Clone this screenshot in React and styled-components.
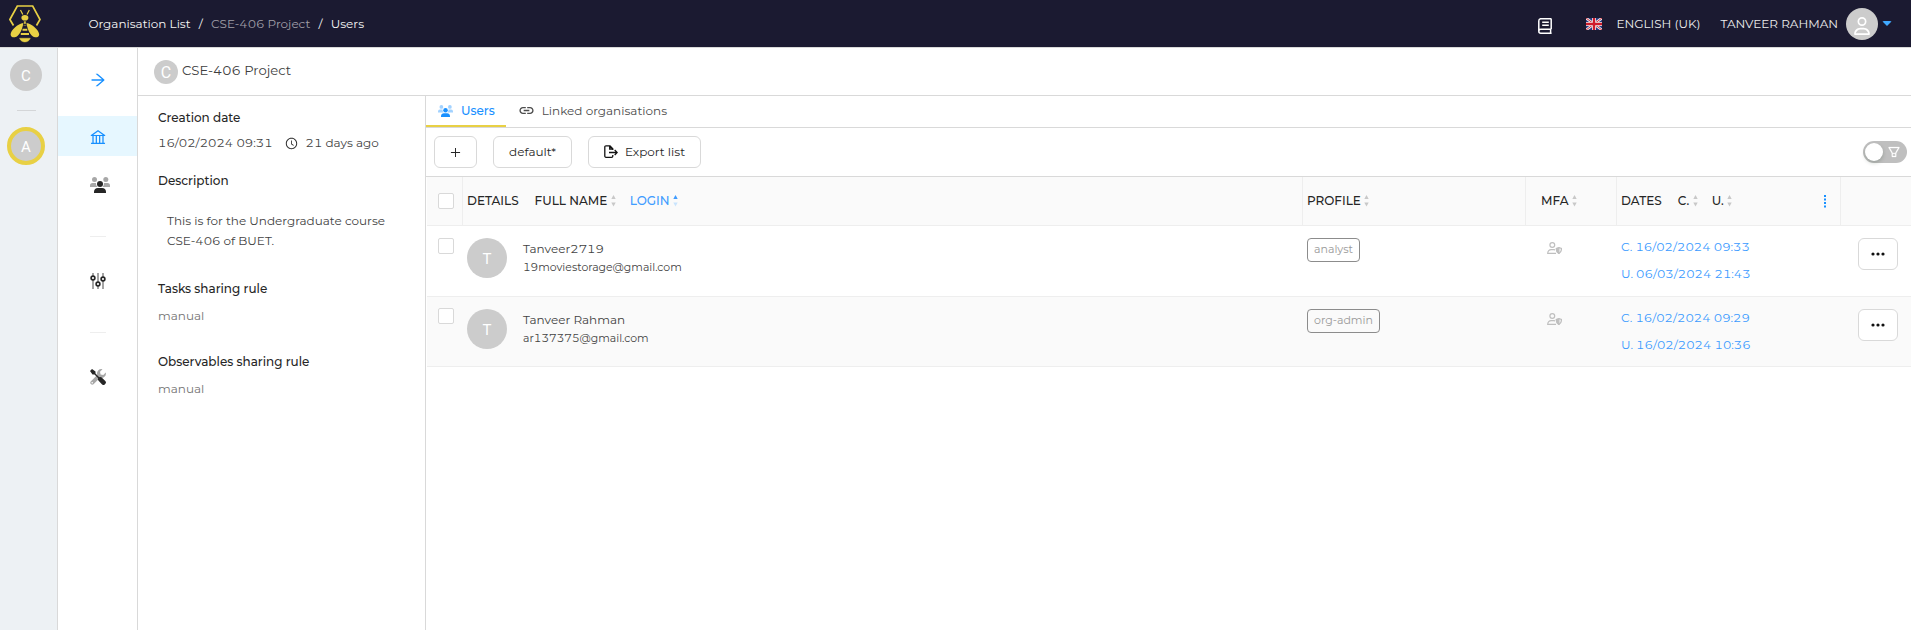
import React from 'react';
import styled, { createGlobalStyle, css } from 'styled-components';
import {
  AiOutlineArrowRight,
  AiOutlineBank,
  AiOutlineClockCircle,
  AiOutlineFilter,
  AiOutlinePlus,
} from 'react-icons/ai';
import { MdLink } from 'react-icons/md';
import { FaRegUser } from 'react-icons/fa6';

const GlobalStyle = createGlobalStyle`
  * { box-sizing: border-box; }
  body {
    margin: 0;
    background: #fff;
    color: #434343;
    font-family: Montserrat, "Liberation Sans", sans-serif;
    font-size: 12px;
    line-height: 20px;
    font-feature-settings: "tnum";
    overflow: hidden;
  }
  svg { display: block; flex: none; }
`;

const Page = styled.div`
  height: 100vh;
  display: flex;
  flex-direction: column;
`;

const Header = styled.header`
  height: 48px;
  flex: none;
  display: flex;
  align-items: center;
  padding: 0 19px 0 9px;
  background: #1b1a31;
  border-bottom: 1px solid #d9d9d9;
  color: #eee;
`;

const Crumbs = styled.nav`
  display: flex;
  gap: 8.2px;
  margin-left: 47.4px;
  flex: 1;
`;

const Crumb = styled.span`
  color: ${(p) => (p.$muted ? '#a09fa8' : '#f6f6f6')};
`;

const Account = styled.div`
  display: flex;
  align-items: center;
  height: 47px;
`;

const Language = styled.span`
  margin: 0 20px 0 14px;
`;

const FlagIcon = styled.svg`
  margin-left: 34px;
`;

const BookIcon = styled.svg`
  margin-top: 4px;
`;

const Caret = styled.span`
  margin-left: 4px;
  border: 5px solid transparent;
  border-top-color: #40a9ff;
  border-bottom: 0;
  border-radius: 2px;
`;

const Avatar = styled.span`
  width: ${(p) => p.$size}px;
  height: ${(p) => p.$size}px;
  flex: none;
  display: flex;
  align-items: center;
  justify-content: center;
  border-radius: 50%;
  background: #ccc;
  color: #fff;
  font: 400 ${(p) => p.$font || 15}px/1 Roboto, sans-serif;
  padding-top: 2px;
  ${(p) =>
    p.$selected &&
    css`
      border: 4px solid #e8d044;
    `}
`;

const HeaderAvatar = styled(Avatar)`
  margin-left: 8px;
  padding-top: 4px;
`;

const Body = styled.div`
  flex: 1;
  display: flex;
  min-height: 0;
`;

const OrgRail = styled.aside`
  width: 58px;
  flex: none;
  display: flex;
  flex-direction: column;
  align-items: center;
  padding: 11px 5px 0 0;
  background: #edf1f4;
  border-right: 1px solid #d9d9d9;
`;

const RailDivider = styled.span`
  width: 19px;
  height: 1px;
  margin: 19px 0 16px;
  background: #d4d6d8;
`;

const Menu = styled.nav`
  width: 80px;
  flex: none;
  padding-top: 12px;
  border-right: 1px solid #d9d9d9;
  color: #262626;
`;

const MenuItem = styled.div`
  height: 40px;
  display: flex;
  align-items: center;
  padding-left: ${(p) => p.$left ?? 32}px;
  padding-top: ${(p) => (p.$active ? 2 : 0)}px;
  margin-bottom: ${(p) => p.$gap || 0}px;
  background: ${(p) => (p.$active ? '#e6f7ff' : 'transparent')};
  color: ${(p) => (p.$blue ? '#1890ff' : 'inherit')};
`;

const MenuDivider = styled.div`
  width: 16px;
  height: 1px;
  margin: 0 0 24px 32px;
  background: #eee;
`;

const Main = styled.main`
  flex: 1;
  min-width: 0;
  display: flex;
  flex-direction: column;
`;

const TitleBar = styled.div`
  height: 48px;
  flex: none;
  display: flex;
  align-items: center;
  gap: 4px;
  padding-left: 16px;
  border-bottom: 1px solid #d9d9d9;
  font-size: 13.2px;
`;

const Title = styled.span`
  padding-bottom: 3px;
  color: #404040;
`;

const Columns = styled.div`
  flex: 1;
  display: flex;
`;

const Details = styled.section`
  width: 288px;
  flex: none;
  padding: 12px 20px;
  border-right: 1px solid #d9d9d9;
`;

const Label = styled.div`
  color: #262626;
  font-weight: 500;
`;

const DateLine = styled.div`
  display: flex;
  align-items: center;
  margin: 5px 0 18px;
`;

const Elapsed = styled.span`
  display: flex;
  align-items: center;
  gap: 8px;
  margin-left: 12px;
`;

const Description = styled.p`
  width: 226px;
  margin: 20px 0 28px 9px;
`;

const Rule = styled.div`
  margin: 7px 0 26px;
  color: #757575;
`;

const Content = styled.section`
  flex: 1;
  min-width: 0;
`;

const Tabs = styled.div`
  height: 32px;
  display: flex;
  border-bottom: 1px solid #d9d9d9;
`;

const Tab = styled.div`
  height: 31px;
  display: flex;
  align-items: center;
  gap: ${(p) => (p.$active ? 8 : 7)}px;
  padding: 0 ${(p) => (p.$active ? 11 : 12)}px 0 12px;
  color: ${(p) => (p.$active ? '#1890ff' : '#4c4c4c')};
  font-weight: ${(p) => (p.$active ? 500 : 400)};
  border-bottom: 2px solid ${(p) => (p.$active ? '#e8d044' : 'transparent')};
`;

const Toolbar = styled.div`
  height: 49px;
  display: flex;
  align-items: center;
  padding: 0 4px 0 8px;
  border-bottom: 1px solid #d9d9d9;
`;

const Button = styled.button`
  width: ${(p) => p.$width}px;
  height: 32px;
  display: flex;
  align-items: center;
  justify-content: center;
  gap: 7px;
  margin-right: 16px;
  padding: 0;
  border: 1px solid #d9d9d9;
  border-radius: 6px;
  background: #fff;
  color: #262626;
  font: inherit;
`;

const Switch = styled.div`
  width: 44px;
  height: 22px;
  margin-left: auto;
  display: flex;
  align-items: center;
  justify-content: space-between;
  padding: 0 6px 0 2px;
  border-radius: 11px;
  background: #bfbfbf;
  color: #fff;
`;

const Knob = styled.span`
  width: 18px;
  height: 18px;
  border-radius: 50%;
  background: #fff;
  box-shadow: 0 2px 4px rgba(0, 35, 11, 0.2);
`;

const Row = styled.div`
  display: grid;
  grid-template-columns: 36px 840px 223px 91px 224px 1fr;
  height: ${(p) => p.$height}px;
  margin-left: 1px;
  border-bottom: 1px solid #eee;
  background: ${(p) => (p.$shaded ? '#fafafa' : '#fff')};
`;

const HeadCell = styled.div`
  display: flex;
  align-items: center;
  padding: 0 ${(p) => p.$right ?? 4}px 0 ${(p) => p.$left ?? 4}px;
  border-right: 1px solid #eee;
  color: #262626;
  font-weight: 500;
  &:last-child { border-right: 0; }
`;

const Sortable = styled.span`
  display: flex;
  align-items: center;
  gap: 3.500px;
  margin-left: ${(p) => p.$gap || 0}px;
  color: ${(p) => (p.$active ? '#409cff' : 'inherit')};
`;

const MoreMark = styled.svg`
  margin-left: auto;
`;

const Cell = styled.div`
  padding: ${(p) => p.$top ?? 12}px 0 0 ${(p) => p.$left ?? 4}px;
`;

const Checkbox = styled.span`
  display: block;
  width: 16px;
  height: 16px;
  flex: none;
  border: 1px solid #d9d9d9;
  border-radius: 2px;
  background: #fff;
`;

const Person = styled.div`
  display: flex;
  gap: 16px;
`;

const PersonText = styled.div`
  padding-top: 2px;
  line-height: 18px;
`;

const Email = styled.div`
  font-size: 10.9px;
`;

const Tag = styled.span`
  display: inline-block;
  height: 24px;
  padding: 0 6px;
  border: 1px solid #8c8c8c;
  border-radius: 4px;
  color: #999;
  font-size: 11px;
  line-height: 21px;
`;

const Stamp = styled.div`
  height: 27px;
  line-height: 26px;
  color: #3a9aff;
`;

function BeeLogo() {
  return (
    <svg width="32" height="38" viewBox="0 0 32 38">
      <path d="M4.500 20.500 0.900 14.500 8.300 1H23.700L31 14.500 27.500 20.500" fill="none" stroke="#e8d044" strokeWidth="1.7" />
      <path d="m11.500 5 2.300 4.500M20.300 5 18 9.500" stroke="#e8d044" strokeWidth="1.2" />
      <ellipse cx="15.9" cy="12.8" rx="3.5" ry="2.8" fill="#e8d044" />
      <path d="M14.300 18C9 18.500 1.500 25.500 1.600 29.500c.1 2.400 2 3 4.200 2.800C10.500 32 14 22.500 14.300 18ZM17.500 18c5.300.5 12.800 7.500 12.700 11.500-.1 2.400-2 3-4.200 2.800C21.300 32 17.800 22.500 17.500 18Z" fill="#e8d044" />
      <path d="M13.500 24.800h4.800M11.800 29h8.200" stroke="#e8d044" strokeWidth="2" />
      <path d="M15.200 16.600h1.400v2.200h-1.400ZM14.500 20.500h2.800M10.500 33.200h10.800c-.7 2.400-3 3.800-5.400 3.800s-4.700-1.400-5.400-3.800Z" fill="#e8d044" stroke="#e8d044" strokeWidth=".4" />
    </svg>
  );
}

function UkFlag() {
  return (
    <FlagIcon width="16" height="12" viewBox="0 0 16 12">
      <path d="M0 0h16v12H0Z" fill="#273a83" />
      <path d="m0 0 16 12M16 0 0 12" stroke="#eee" strokeWidth="2.6" />
      <path d="m0 0 16 12M16 0 0 12" stroke="#cf1b2b" strokeWidth=".9" />
      <path d="M8 0v12M0 6h16" stroke="#eee" strokeWidth="4" />
      <path d="M8 0v12M0 6h16" stroke="#cf1b2b" strokeWidth="2.4" />
    </FlagIcon>
  );
}

function Book() {
  return (
    <BookIcon width="14" height="16" viewBox="0 0 14 16" fill="none" stroke="#fff" strokeWidth="1.5">
      <path d="M13.200 11.300V1.500a.8.800 0 0 0-.8-.8H3A2.200 2.200 0 0 0 .8 2.900v10.200M13.600 15.200H2.800a2 2 0 0 1 0-4h10.400M12.600 11.500v3.500M4.200 4.300h6.600M4.200 7.200h6.600" />
    </BookIcon>
  );
}

function PeopleIcon({ width, height }) {
  return (
    <svg width={width} height={height} viewBox="0 0 20 16" fill="currentColor">
      <g opacity=".4">
        <circle cx="4.5" cy="2.5" r="2.5" />
        <circle cx="15.8" cy="2.5" r="2.5" />
        <path d="M2.500 6H6c0 2 .6 3 1.600 4H0V8.500A2.500 2.500 0 0 1 2.500 6ZM17.500 6H14c0 2-.6 3-1.600 4H20V8.500A2.500 2.500 0 0 0 17.500 6Z" />
      </g>
      <circle cx="10" cy="7" r="3" />
      <path d="M7.800 11h4.400C14.300 11 16 12.700 16 14.800V16H4v-1.200C4 12.700 5.700 11 7.800 11Z" />
    </svg>
  );
}

function SlidersIcon() {
  return (
    <svg width="16" height="16" viewBox="0 0 16 16" fill="none" stroke="currentColor">
      <path d="M3 0v3M3 7v9M8 0v9M8 13v3M13 0v4M13 8v8" strokeWidth="2" opacity=".42" />
      <g strokeWidth="1.6">
        <circle cx="3" cy="5" r="1.9" />
        <circle cx="8" cy="11" r="1.9" />
        <circle cx="13" cy="6" r="1.9" />
      </g>
    </svg>
  );
}

function ToolsIcon() {
  return (
    <svg width="16" height="16" viewBox="0 0 16 16" fill="currentColor">
      <path fillRule="evenodd" opacity=".4" d="M15.800 3.500 13.300 6l-2.700-.6L10 2.700 12.500.2A4.500 4.500 0 0 0 7.200 6L.7 12.500a2 2 0 0 0 2.800 2.800L10 8.800a4.500 4.500 0 0 0 5.800-5.300ZM2.200 14.500a.8.800 0 1 1 0-1.600.8.800 0 0 1 0 1.600Z" />
      <path d="M0 2 2 0l3.500 2.500v2l3.700 3.700c1-.5 1.800-.3 2.500.4l3.600 3.500a1.900 1.900 0 0 1 0 2.700l-.5.600a1.900 1.900 0 0 1-2.700 0L8.600 11.800c-.7-.7-.9-1.500-.4-2.500L4.500 5.500h-2Z" />
    </svg>
  );
}

function ExportIcon() {
  return (
    <svg width="14" height="14" viewBox="0 0 14 14" fill="none" stroke="#111" strokeWidth="1.3">
      <path d="M8.800 5V3.800L6 .8H2A1.200 1.200 0 0 0 .8 2v9A1.200 1.200 0 0 0 2 12.300h5.600a1.200 1.200 0 0 0 1.200-1.200V10M5.700.8V4h3M5 7.500h8M10.700 5l2.500 2.500-2.500 2.500" />
    </svg>
  );
}

function UserShieldIcon() {
  return (
    <svg width="15" height="12" viewBox="0 0 15 12" fill="none" stroke="#bfbfbf" strokeWidth="1.2">
      <circle cx="5.3" cy="3" r="2.4" />
      <path d="M9 11.400H.7C.7 9 2.200 7.600 4.200 7.600h2.600c.5 0 .9.100 1.300.200" />
      <path d="M11.900 5.600 14.500 6.500c0 2.400-.8 4.100-2.600 5-1.800-.9-2.600-2.600-2.600-5Z" />
      <path d="M11.900 6v5.200c-1.700-1-2.300-2.400-2.400-4.500Z" fill="#bfbfbf" />
    </svg>
  );
}

function SortArrows({ active }) {
  return (
    <svg width="5" height="12" viewBox="0 0 5 12">
      <path d="M2.500 0 4.700 4H.3Z" fill={active ? '#409cff' : '#c8c8c8'} />
      <path d="M2.500 11.500 4.700 7.500H.3Z" fill={active ? '#c9e4fd' : '#c8c8c8'} />
    </svg>
  );
}

function Dots() {
  return (
    <svg width="14" height="4" viewBox="0 0 14 4" fill="#111">
      <circle cx="2" cy="2" r="1.6" />
      <circle cx="7" cy="2" r="1.6" />
      <circle cx="12" cy="2" r="1.6" />
    </svg>
  );
}

const users = [
  { name: 'Tanveer2719', email: '19moviestorage@gmail.com', profile: 'analyst', created: '16/02/2024 09:33', updated: '06/03/2024 21:43', height: 71, checkTop: 12 },
  { name: 'Tanveer Rahman', email: 'ar137375@gmail.com', profile: 'org-admin', created: '16/02/2024 09:29', updated: '16/02/2024 10:36', height: 70, checkTop: 11 },
];

export default function App() {
  return (
    <Page>
      <GlobalStyle />
      <Header>
        <BeeLogo />
        <Crumbs>
          <Crumb>Organisation List</Crumb>
          <Crumb>/</Crumb>
          <Crumb $muted>CSE-406 Project</Crumb>
          <Crumb>/</Crumb>
          <Crumb>Users</Crumb>
        </Crumbs>
        <Account>
          <Book />
          <UkFlag />
          <Language>ENGLISH (UK)</Language>
          <span>TANVEER RAHMAN</span>
          <HeaderAvatar $size={32}><FaRegUser size={18} /></HeaderAvatar>
          <Caret />
        </Account>
      </Header>
      <Body>
        <OrgRail>
          <Avatar $size={32}>C</Avatar>
          <RailDivider />
          <Avatar $size={38} $selected>A</Avatar>
        </OrgRail>
        <Menu>
          <MenuItem $blue $left={31} $gap={16}><AiOutlineArrowRight size={18} /></MenuItem>
          <MenuItem $blue $left={31} $active $gap={9}><AiOutlineBank size={18} /></MenuItem>
          <MenuItem $gap={31}><PeopleIcon width={20} height={16} /></MenuItem>
          <MenuDivider />
          <MenuItem $gap={31}><SlidersIcon /></MenuItem>
          <MenuDivider />
          <MenuItem><ToolsIcon /></MenuItem>
        </Menu>
        <Main>
          <TitleBar>
            <Avatar $size={24} $font={16}>C</Avatar>
            <Title>CSE-406 Project</Title>
          </TitleBar>
          <Columns>
            <Details>
              <Label>Creation date</Label>
              <DateLine>
                16/02/2024 09:31
                <Elapsed><AiOutlineClockCircle size={13} color="#262626" />21 days ago</Elapsed>
              </DateLine>
              <Label>Description</Label>
              <Description>This is for the Undergraduate course CSE-406 of BUET.</Description>
              <Label>Tasks sharing rule</Label>
              <Rule>manual</Rule>
              <Label>Observables sharing rule</Label>
              <Rule>manual</Rule>
            </Details>
            <Content>
              <Tabs>
                <Tab $active><PeopleIcon width={15} height={12} />Users</Tab>
                <Tab><MdLink size={17} />Linked organisations</Tab>
              </Tabs>
              <Toolbar>
                <Button $width={43}><AiOutlinePlus size={13} /></Button>
                <Button $width={79}>default*</Button>
                <Button $width={113}><ExportIcon />Export list</Button>
                <Switch><Knob /><AiOutlineFilter size={14} stroke="#fff" strokeWidth={20} /></Switch>
              </Toolbar>
              <Row $height={49} $shaded>
                <HeadCell $left={11}><Checkbox /></HeadCell>
                <HeadCell>
                  DETAILS
                  <Sortable $gap={16}>FULL NAME<SortArrows /></Sortable>
                  <Sortable $gap={14} $active>LOGIN<SortArrows active /></Sortable>
                </HeadCell>
                <HeadCell><Sortable>PROFILE<SortArrows /></Sortable></HeadCell>
                <HeadCell $left={15}><Sortable>MFA<SortArrows /></Sortable></HeadCell>
                <HeadCell $right={13}>
                  DATES
                  <Sortable $gap={16}>C.<SortArrows /></Sortable>
                  <Sortable $gap={14}>U.<SortArrows /></Sortable>
                  <MoreMark width="4" height="14" viewBox="0 0 4 14" fill="#1890ff">
                    <path d="M1 1h2v2H1zM1 4.500h2v2H1zM1 8h2v2H1zM1 11.500h2v2H1z" />
                  </MoreMark>
                </HeadCell>
                <HeadCell />
              </Row>
              {users.map((u, i) => (
                <Row key={u.email} $height={u.height} $shaded={i % 2 === 1}>
                  <Cell $top={u.checkTop} $left={11}><Checkbox /></Cell>
                  <Cell>
                    <Person>
                      <Avatar $size={40} $font={15}>T</Avatar>
                      <PersonText>
                        <div>{u.name}</div>
                        <Email>{u.email}</Email>
                      </PersonText>
                    </Person>
                  </Cell>
                  <Cell><Tag>{u.profile}</Tag></Cell>
                  <Cell $top={16} $left={21}><UserShieldIcon /></Cell>
                  <Cell $top={8} $left={4}>
                    <Stamp>C. {u.created}</Stamp>
                    <Stamp>U. {u.updated}</Stamp>
                  </Cell>
                  <Cell $left={17}><Button $width={40}><Dots /></Button></Cell>
                </Row>
              ))}
            </Content>
          </Columns>
        </Main>
      </Body>
    </Page>
  );
}
